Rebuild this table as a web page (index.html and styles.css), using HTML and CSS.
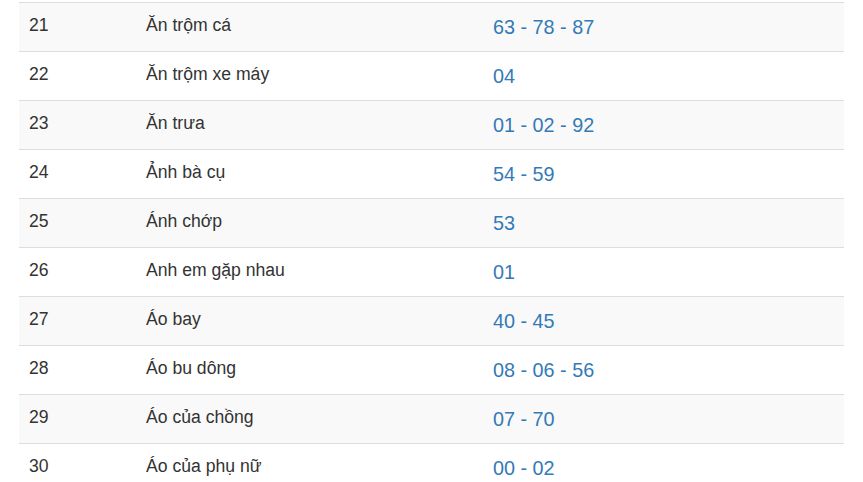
FILE: index.html
```html
<!DOCTYPE html>
<html lang="vi">
<head>
<meta charset="utf-8">
<title>Giải mã giấc mơ</title>
<link rel="stylesheet" href="styles.css">
</head>
<body>
<div class="wrap">
<table class="dream-table">
<colgroup>
<col class="c-no">
<col class="c-name">
<col class="c-num">
</colgroup>
<tbody>
<tr><td class="no">21</td><td class="name">Ăn trộm cá</td><td class="num">63 - 78 - 87</td></tr>
<tr><td class="no">22</td><td class="name">Ăn trộm xe máy</td><td class="num">04</td></tr>
<tr><td class="no">23</td><td class="name">Ăn trưa</td><td class="num">01 - 02 - 92</td></tr>
<tr><td class="no">24</td><td class="name">Ảnh bà cụ</td><td class="num">54 - 59</td></tr>
<tr><td class="no">25</td><td class="name">Ánh chớp</td><td class="num">53</td></tr>
<tr><td class="no">26</td><td class="name">Anh em gặp nhau</td><td class="num">01</td></tr>
<tr><td class="no">27</td><td class="name">Áo bay</td><td class="num">40 - 45</td></tr>
<tr><td class="no">28</td><td class="name">Áo bu dông</td><td class="num">08 - 06 - 56</td></tr>
<tr><td class="no">29</td><td class="name">Áo của chồng</td><td class="num">07 - 70</td></tr>
<tr><td class="no">30</td><td class="name">Áo của phụ nữ</td><td class="num">00 - 02</td></tr>
</tbody>
</table>
</div>
</body>
</html>
```
FILE: styles.css
```css
html, body {
  margin: 0;
  padding: 0;
  background: #ffffff;
}
body {
  font-family: "Liberation Sans", Arial, sans-serif;
  color: #333333;
  overflow: hidden;
}
.wrap {
  padding: 2px 0 0 19px;
}
.dream-table {
  border-collapse: collapse;
  border-spacing: 0;
  table-layout: fixed;
  width: 825px;
}
.c-no { width: 117px; }
.c-name { width: 347px; }
.c-num { width: 361px; }
.dream-table td {
  border-top: 1px solid #dddddd;
  vertical-align: top;
  text-align: left;
  white-space: nowrap;
}
.dream-table tr:nth-child(odd) td {
  background: #f9f9f9;
}
.no, .name {
  font-size: 17.6px;
  line-height: 25px;
  padding: 10px 10px 13px;
}
.num {
  font-size: 19.8px;
  line-height: 28px;
  padding: 10px 10px 10px;
  color: #337ab7;
}
```
